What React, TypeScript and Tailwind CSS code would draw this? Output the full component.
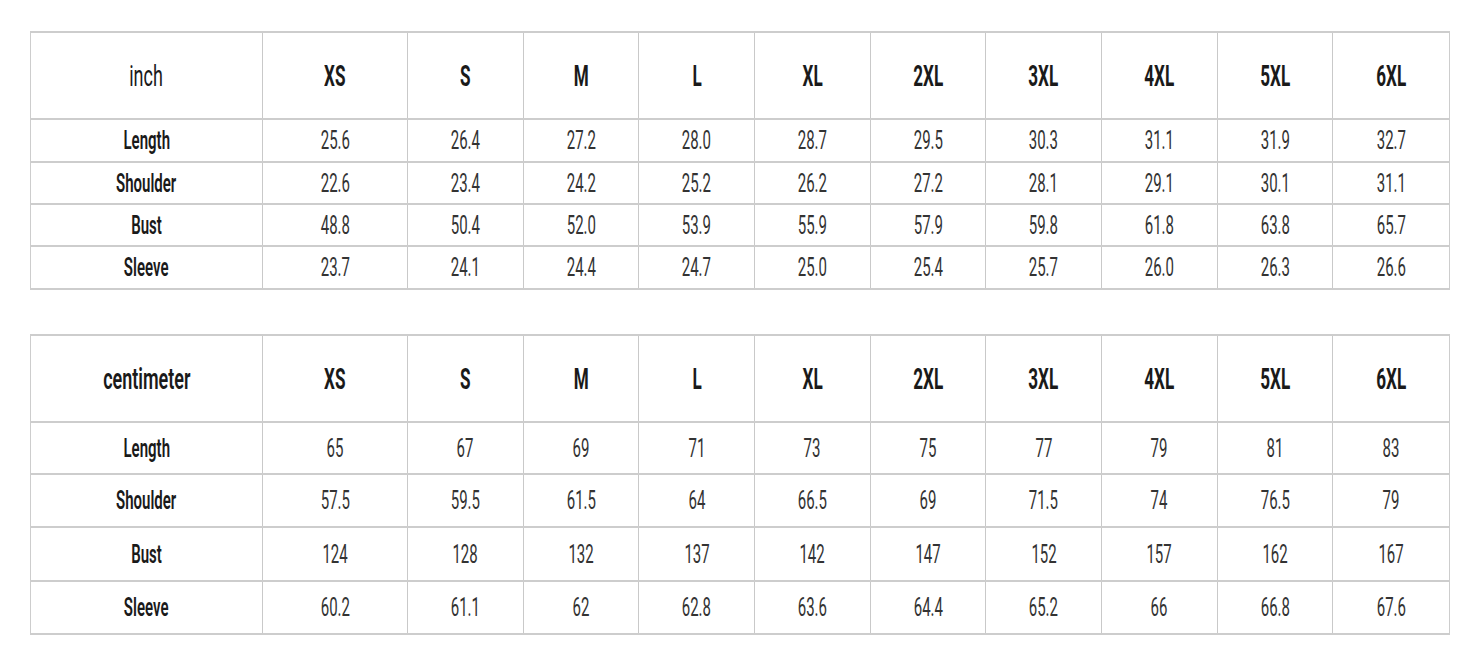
import React from "react";

const sizes = ["XS", "S", "M", "L", "XL", "2XL", "3XL", "4XL", "5XL", "6XL"];

type Row = { label: string; values: string[] };

const inchRows: Row[] = [
  { label: "Length", values: ["25.6", "26.4", "27.2", "28.0", "28.7", "29.5", "30.3", "31.1", "31.9", "32.7"] },
  { label: "Shoulder", values: ["22.6", "23.4", "24.2", "25.2", "26.2", "27.2", "28.1", "29.1", "30.1", "31.1"] },
  { label: "Bust", values: ["48.8", "50.4", "52.0", "53.9", "55.9", "57.9", "59.8", "61.8", "63.8", "65.7"] },
  { label: "Sleeve", values: ["23.7", "24.1", "24.4", "24.7", "25.0", "25.4", "25.7", "26.0", "26.3", "26.6"] },
];

const cmRows: Row[] = [
  { label: "Length", values: ["65", "67", "69", "71", "73", "75", "77", "79", "81", "83"] },
  { label: "Shoulder", values: ["57.5", "59.5", "61.5", "64", "66.5", "69", "71.5", "74", "76.5", "79"] },
  { label: "Bust", values: ["124", "128", "132", "137", "142", "147", "152", "157", "162", "167"] },
  { label: "Sleeve", values: ["60.2", "61.1", "62", "62.8", "63.6", "64.4", "65.2", "66", "66.8", "67.6"] },
];

const gridCols = "grid grid-cols-[232px_145px_repeat(9,minmax(0,1fr))]";

function Cell({ children, last }: { children: React.ReactNode; last?: boolean }) {
  return (
    <div
      className={
        "flex items-center justify-center overflow-visible " +
        (last ? "" : "border-r border-[#c9c9c9]")
      }
    >
      {children}
    </div>
  );
}

function SizeTable({
  unit,
  unitBold,
  rows,
  heights,
}: {
  unit: string;
  unitBold: boolean;
  rows: Row[];
  heights: number[];
}) {
  return (
    <div className="w-[1420px] border-t-2 border-l border-r border-[#cdcdcd]">
      <div className={gridCols + " border-b-2 border-[#cdcdcd]"} style={{ height: heights[0] }}>
        <Cell>
          <span
            className={
              "inline-block scale-x-[0.6] text-[30px] leading-none text-[#1a1a1a] " +
              (unitBold ? "font-semibold" : "font-normal")
            }
          >
            {unit}
          </span>
        </Cell>
        {sizes.map((s, i) => (
          <Cell key={s} last={i === sizes.length - 1}>
            <span className="inline-block scale-x-[0.57] text-[30px] font-bold leading-none text-[#1a1a1a]">
              {s}
            </span>
          </Cell>
        ))}
      </div>
      {rows.map((r, ri) => (
        <div
          key={r.label}
          className={gridCols + " border-b-2 border-[#cdcdcd]"}
          style={{ height: heights[ri + 1] }}
        >
          <Cell>
            <span className="inline-block scale-x-[0.6] text-[25px] font-semibold leading-none text-[#1a1a1a]">
              {r.label}
            </span>
          </Cell>
          {r.values.map((v, i) => (
            <Cell key={i} last={i === r.values.length - 1}>
              <span className="inline-block scale-x-[0.6] text-[25px] font-normal leading-none text-[#333333]">
                {v}
              </span>
            </Cell>
          ))}
        </div>
      ))}
    </div>
  );
}

export default function App() {
  return (
    <div
      className="w-[1475px] h-[671px] bg-white pl-[30px] pt-[31px] overflow-hidden"
      style={{ fontFamily: "Roboto, 'Liberation Sans', sans-serif" }}
    >
      <SizeTable unit="inch" unitBold={false} rows={inchRows} heights={[87, 43, 42, 42, 43]} />
      <div className="h-[44px]" />
      <SizeTable unit="centimeter" unitBold={true} rows={cmRows} heights={[87, 52, 53, 54, 53]} />
    </div>
  );
}
